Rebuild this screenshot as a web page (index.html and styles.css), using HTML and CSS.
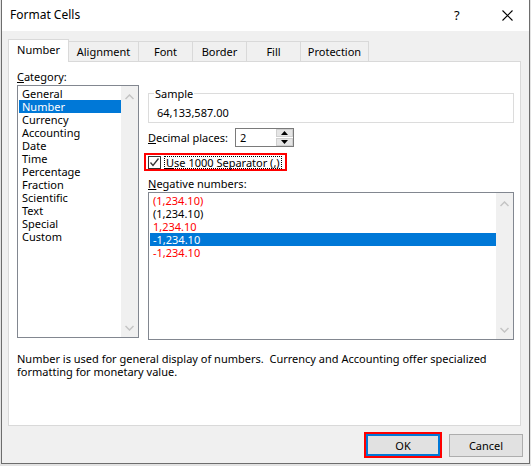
FILE: index.html
```html
<!DOCTYPE html>
<html>
<head>
<meta charset="utf-8">
<title>Format Cells</title>
<link rel="stylesheet" href="styles.css">
</head>
<body>
<div class="dialog">
  <div class="titlebar">
    <span class="title">Format Cells</span>
    <span class="help">?</span>
    <svg class="close" width="11" height="11" viewBox="0 0 11 11"><path d="M0.5 0.5 L10.5 10.5 M10.5 0.5 L0.5 10.5" stroke="#000" stroke-width="1.1" fill="none"/></svg>
  </div>
  <div class="tabs">
    <div class="tab tab-active tab-number">Number</div>
    <div class="tab tab-alignment">Alignment</div>
    <div class="tab tab-font">Font</div>
    <div class="tab tab-border">Border</div>
    <div class="tab tab-fill">Fill</div>
    <div class="tab tab-protection">Protection</div>
  </div>
  <div class="panel">
    <div class="cols">
      <div class="leftcol">
        <div class="label"><u>C</u>ategory:</div>
        <div class="listbox cat-list">
          <div class="items">
            <div class="item">General</div>
            <div class="item sel">Number</div>
            <div class="item">Currency</div>
            <div class="item">Accounting</div>
            <div class="item">Date</div>
            <div class="item">Time</div>
            <div class="item">Percentage</div>
            <div class="item">Fraction</div>
            <div class="item">Scientific</div>
            <div class="item">Text</div>
            <div class="item">Special</div>
            <div class="item">Custom</div>
          </div>
          <div class="vscroll">
            <svg width="9" height="6" viewBox="0 0 9 6"><polyline points="0.5,5 4.5,1 8.5,5" stroke="#c4c4c4" stroke-width="1.5" fill="none"/></svg>
            <svg width="9" height="6" viewBox="0 0 9 6"><polyline points="0.5,1 4.5,5 8.5,1" stroke="#c4c4c4" stroke-width="1.5" fill="none"/></svg>
          </div>
        </div>
      </div>
      <div class="rightcol">
        <fieldset class="sample">
          <legend>Sample</legend>
          <div class="sample-value">64,133,587.00</div>
        </fieldset>
        <div class="decimal-row">
          <span class="decimal-label"><u>D</u>ecimal places:</span>
          <div class="spin">
            <span class="spin-value">2</span>
            <div class="spin-btns">
              <div class="spin-btn"><svg width="7" height="4" viewBox="0 0 7 4"><polygon points="0,4 7,4 3.5,0" fill="#000"/></svg></div>
              <div class="spin-btn"><svg width="7" height="4" viewBox="0 0 7 4"><polygon points="0,0 7,0 3.5,4" fill="#000"/></svg></div>
            </div>
          </div>
        </div>
        <div class="check-row">
          <span class="highlight-box">
            <span class="checkbox"><svg width="11" height="11" viewBox="0 0 11 11"><polyline points="1.5,5.5 4,8.5 9.5,1.5" stroke="#333" stroke-width="1.3" fill="none"/></svg></span>
            <span class="focus-text"><u>U</u>se 1000 Separator (,)</span>
          </span>
        </div>
        <div class="label neg-label"><u>N</u>egative numbers:</div>
        <div class="listbox neg-list">
          <div class="items">
            <div class="item red">(1,234.10)</div>
            <div class="item">(1,234.10)</div>
            <div class="item red">1,234.10</div>
            <div class="item sel">-1,234.10</div>
            <div class="item red">-1,234.10</div>
          </div>
          <div class="vscroll">
            <svg width="9" height="6" viewBox="0 0 9 6"><polyline points="0.5,5 4.5,1 8.5,5" stroke="#c4c4c4" stroke-width="1.5" fill="none"/></svg>
            <svg width="9" height="6" viewBox="0 0 9 6"><polyline points="0.5,1 4.5,5 8.5,1" stroke="#c4c4c4" stroke-width="1.5" fill="none"/></svg>
          </div>
        </div>
      </div>
    </div>
    <p class="desc">Number is used for general display of numbers.&nbsp; Currency and Accounting offer specialized formatting for monetary value.</p>
  </div>
  <div class="buttons">
    <span class="ok-wrap"><button class="btn btn-ok">OK</button></span>
    <button class="btn btn-cancel">Cancel</button>
  </div>
</div>
</body>
</html>
```

FILE: styles.css
```css
* { box-sizing: border-box; }
html, body { margin: 0; padding: 0; }
body {
  background: #e3e3e3;
  padding-left: 1px;
  font-family: "Noto Sans", "Open Sans", sans-serif;
  font-size: 11px;
  color: #000;
  width: 531px;
  height: 466px;
  overflow: hidden;
}
.dialog {
  width: 529px;
  height: 464px;
  background: #f0f0f0;
  border: 1px solid #6d6d6d;
  border-top: none;
  display: flex;
  flex-direction: column;
}
.titlebar {
  height: 31px;
  background: #fff;
  display: flex;
  align-items: center;
  padding-left: 8px;
  flex: none;
}
.title {
  font-size: 12px;
  flex: 1;
  line-height: 16px;
  padding-bottom: 1px;
}
.help {
  font-size: 13px;
  width: 11px;
  line-height: 16px;
  margin-right: 37px;
  padding-bottom: 1px;
}
.close {
  margin-right: 16px;
  display: block;
}
.tabs {
  display: flex;
  align-items: flex-end;
  height: 22px;
  margin-top: 8px;
  padding-left: 6px;
  flex: none;
  position: relative;
  z-index: 1;
}
.tab {
  height: 20px;
  border: 1px solid #d9d9d9;
  border-bottom: none;
  margin-left: -1px;
  background: #f0f0f0;
  display: flex;
  align-items: center;
  justify-content: center;
  padding-bottom: 1px;
}
.tab-active {
  height: 23px;
  background: #fff;
  margin-bottom: -1px;
  margin-left: 0;
  padding-bottom: 3px;
  position: relative;
  z-index: 2;
}
.tab-number { width: 61px; }
.tab-alignment { width: 71px; }
.tab-font { width: 55px; }
.tab-border { width: 55px; }
.tab-fill { width: 55px; }
.tab-protection { width: 69px; }
.panel {
  margin-left: 6px;
  margin-right: 8px;
  height: 365px;
  background: #fff;
  border: 1px solid #d9d9d9;
  padding: 7px 6px 0 8px;
  flex: none;
}
.cols {
  display: grid;
  grid-template-columns: 122px 366px;
  column-gap: 9px;
  align-items: start;
}
.label {
  line-height: 15px;
  height: 15px;
  margin-bottom: 1px;
}
.listbox {
  border: 1px solid #828790;
  background: #fff;
  display: flex;
  padding: 1px 0 0 1px;
}
.cat-list { height: 253px; }
.neg-list { height: 148px; }
.items { flex: 1; min-width: 0; }
.item {
  height: 13px;
  line-height: 13px;
  padding-left: 3px;
  white-space: nowrap;
}
.item.sel { background: #0078d7; color: #fff; }
.item.red { color: #ff0000; }
.vscroll {
  width: 17px;
  flex: none;
  margin-top: -1px;
  background: #f0f0f0;
  display: flex;
  flex-direction: column;
  justify-content: space-between;
  align-items: center;
  padding: 8px 0 6px;
}
.vscroll svg { display: block; }
.rightcol { padding-top: 17px; }
.sample {
  margin: 0;
  border: 1px solid #dcdcdc;
  padding: 0 0 2px 5px;
  min-width: 0;
}
.sample legend {
  padding: 0 1px;
  line-height: 15px;
}
.sample-value {
  margin-top: 4px;
  line-height: 15px;
  padding-left: 3px;
}
.decimal-row {
  display: flex;
  align-items: center;
  margin-top: 5px;
}
.decimal-label { width: 87px; line-height: 15px; }
.spin {
  width: 59px;
  height: 19px;
  border: 1px solid #7a7a7a;
  display: flex;
  background: #fff;
}
.spin-value { flex: 1; padding-left: 4px; line-height: 17px; }
.spin-btns {
  width: 17px;
  display: flex;
  flex-direction: column;
  gap: 1px;
}
.spin-btn {
  flex: 1;
  background: #e5e5e5;
  border: 1px solid #cfcfcf;
  display: flex;
  align-items: center;
  justify-content: center;
}
.spin-btn svg { display: block; }
.check-row {
  margin-top: 6px;
  margin-left: -4px;
  height: 18px;
}
.highlight-box {
  display: inline-flex;
  align-items: center;
  height: 18px;
  border: 2px solid #ff0000;
  padding: 0 3px 0 2px;
}
.checkbox {
  width: 13px;
  height: 13px;
  border: 1px solid #333;
  background: #fff;
  display: flex;
  align-items: center;
  justify-content: center;
}
.checkbox svg { display: block; }
.focus-text {
  margin-left: 3px;
  border: 1px dotted #000;
  line-height: 11px;
  padding: 0 1px;
}
.neg-label { margin-top: 5px; }
.desc {
  margin: 12px 0 0;
  line-height: 13px;
}
.buttons {
  display: flex;
  justify-content: flex-end;
  align-items: center;
  margin-top: 6px;
  padding-right: 6px;
}
.ok-wrap {
  border: 2px solid #ff0000;
  display: block;
}
.btn {
  font-family: "Noto Sans", "Open Sans", sans-serif;
  font-size: 11px;
  color: #000;
  background: #e1e1e1;
  margin: 0;
  padding: 0;
  display: block;
}
.btn-ok {
  width: 74px;
  height: 22px;
  border: 2px solid #0078d7;
}
.btn-cancel {
  width: 74px;
  height: 23px;
  border: 1px solid #adadad;
  margin-left: 7px;
}
```
